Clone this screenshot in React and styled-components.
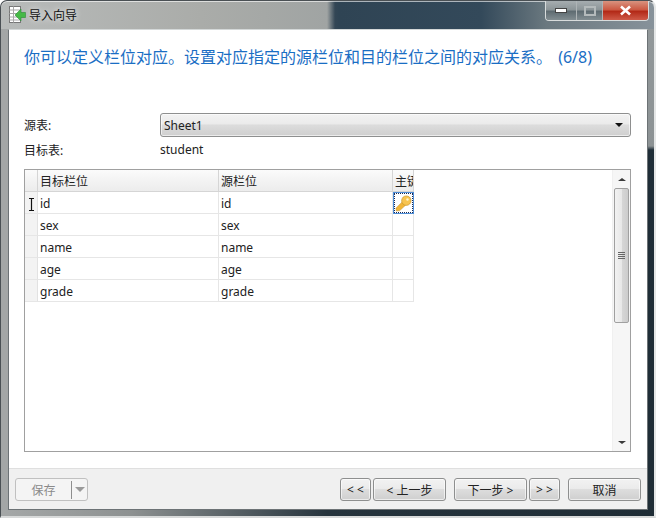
import React from 'react';
import styled, { createGlobalStyle } from 'styled-components';

const GlobalStyle = createGlobalStyle`
  html, body {
    margin: 0;
    padding: 0;
    background: #fff;
  }
  * {
    box-sizing: border-box;
  }
`;

const uiFont = `"Noto Sans", "Noto Sans CJK SC", "DejaVu Sans", sans-serif`;

const Window = styled.div`
  width: 656px;
  height: 518px;
  display: flex;
  flex-direction: column;
  overflow: hidden;
  border-radius: 7px 7px 0 0;
  border: 1px solid #4a5054;
  border-right: 2px solid #e4e6e6;
  border-bottom: 2px solid #d8dada;
  padding: 0 6px 6px 7px;
  box-shadow: inset 0 1px 0 rgba(255, 255, 255, 0.6);
  background:
    linear-gradient(90deg, #b8bbba 0, #aaaca9 200px, #a0a4a3 326px, #334655 334px, #2f4454 338px, #33495a 480px, #6a787f 545px, #87929a 100%) 0 0 / 100% 28px no-repeat,
    linear-gradient(180deg, #93999b 0, #8c9294 145px, #1f2e38 149px, #1f2d36 100%) 100% 0 / 6px 100% no-repeat,
    linear-gradient(90deg, #a5a8a8 0, #8d9191 20%, #26343d 50%, #1f2d36 100%) 0 100% / 100% 6px no-repeat,
    #a3a6a6;
  font-family: ${uiFont};
  color: #222;
`;

const TitleBar = styled.div`
  height: 28px;
  flex: none;
  display: flex;
  align-items: flex-start;
  justify-content: space-between;
`;

const TitleLeft = styled.div`
  display: flex;
  align-items: center;
  gap: 3px;
  height: 28px;
  padding-left: 1px;
  font-size: 12px;
  color: #111;
  text-shadow: 0 0 6px #fff;
`;

const WinButtons = styled.div`
  display: flex;
  height: 20px;
  margin-right: -1px;
  border: 1px solid #d8dcdc;
  border-top: none;
  border-radius: 0 0 4px 4px;
  overflow: hidden;
`;

const WinButton = styled.div`
  width: ${({ $w }) => $w}px;
  height: 100%;
  display: flex;
  align-items: center;
  justify-content: center;
  border-left: ${({ $first }) => ($first ? 'none' : '1px solid #aeb4b6')};
  background: ${({ $close }) =>
    $close
      ? 'linear-gradient(180deg, #d9937f 0, #cc5a44 45%, #b32a18 55%, #cf5a48 100%)'
      : 'linear-gradient(180deg, #a6adb0 0, #8c9598 45%, #5f6c72 55%, #828d91 100%)'};
`;

const Content = styled.div`
  flex: 1;
  min-height: 0;
  display: flex;
  flex-direction: column;
  background: #fff;
  border: 1px solid #6c7275;
  border-top-color: #d4d8d8;
`;

const Main = styled.div`
  flex: 1;
  min-height: 0;
  display: flex;
  flex-direction: column;
  padding: 17px 16px 16px 15px;
`;

const Heading = styled.h1`
  margin: 0 0 46px;
  height: 20px;
  font-size: 16px;
  line-height: 20px;
  font-weight: 400;
  word-spacing: 2px;
  color: #1a6ec4;
  white-space: pre;
`;

const FormRow = styled.div`
  display: grid;
  grid-template-columns: 136px 1fr;
  align-items: center;
  height: ${({ $h }) => $h}px;
  margin-bottom: ${({ $mb }) => $mb || 0}px;
  font-size: 12px;
`;

const Select = styled.div`
  height: 24px;
  display: flex;
  align-items: center;
  justify-content: space-between;
  padding: 0 7px 0 3px;
  border: 1px solid #8e8f8f;
  border-radius: 3px;
  box-shadow: inset 0 0 0 1px rgba(255, 255, 255, 0.6);
  background: linear-gradient(180deg, #f2f2f2 0, #ebebeb 45%, #dcdcdc 50%, #cfcfcf 100%);
`;

const Arrow = styled.span`
  width: 0;
  height: 0;
  border-left: ${({ $s }) => $s}px solid transparent;
  border-right: ${({ $s }) => $s}px solid transparent;
  border-top: ${({ $s }) => $s}px solid ${({ $c }) => $c};
`;

const GridBox = styled.div`
  position: relative;
  flex: 1;
  min-height: 0;
  margin-top: 8px;
  display: flex;
  justify-content: space-between;
  border: 1px solid #a0a0a0;
  background: #fff;
`;

const Table = styled.div`
  width: 389px;
  display: flex;
  flex-direction: column;
  font-size: 12px;
`;

const Row = styled.div`
  display: grid;
  grid-template-columns: 13px 181px 174px 21px;
  height: 22px;
`;

const HeadCell = styled.div`
  display: flex;
  align-items: center;
  padding: 1px 0 0 2px;
  overflow: hidden;
  white-space: nowrap;
  border-right: 1px solid #d5d5d5;
  border-bottom: 1px solid #d5d5d5;
  background: linear-gradient(180deg, #fbfbfb 0, #f3f3f3 50%, #ececec 100%);
`;

const RowMark = styled.div`
  border-right: 1px solid #e2e2e2;
  border-bottom: 1px solid #e6e6e6;
  background: #f3f3f3;
`;

const Cell = styled.div`
  display: flex;
  align-items: center;
  padding: 1px 0 0 2px;
  border-right: 1px solid #e6e6e6;
  border-bottom: 1px solid #e6e6e6;
  background: #fff;
`;

const KeyCell = styled(Cell)`
  justify-content: center;
  padding: 0;
  ${({ $focus }) =>
    $focus &&
    `
    border: 1px solid #4f8fd8;
    outline: 1px dotted #1c2a52;
    outline-offset: -2px;
    background: #fff;
  `}
`;

const TextCursor = styled.svg`
  position: absolute;
  left: 3px;
  top: 28px;
`;

const ScrollBar = styled.div`
  width: 18px;
  display: flex;
  flex-direction: column;
  background: #f6f6f6;
  border-left: 1px solid #f0f0f0;
`;

const ScrollEnd = styled.div`
  height: 18px;
  flex: none;
  display: flex;
  align-items: center;
  justify-content: center;
`;

const ArrowUp = styled.span`
  width: 0;
  height: 0;
  border-left: 4px solid transparent;
  border-right: 4px solid transparent;
  border-bottom: 3px solid #3a3a3a;
`;

const ArrowDown = styled.span`
  width: 0;
  height: 0;
  border-left: 4px solid transparent;
  border-right: 4px solid transparent;
  border-top: 3px solid #3a3a3a;
`;

const Thumb = styled.div`
  height: 135px;
  flex: none;
  margin: 0 1px;
  display: flex;
  flex-direction: column;
  align-items: center;
  justify-content: center;
  gap: 1px;
  border: 1px solid #a0a0a0;
  border-radius: 2px;
  background: linear-gradient(90deg, #f2f2f2 0, #e8e8e8 50%, #d6d6d6 55%, #cccccc 100%);
`;

const Grip = styled.span`
  width: 7px;
  height: 1px;
  background: #666;
`;

const Track = styled.div`
  flex: 1;
`;

const Footer = styled.div`
  height: 41px;
  flex: none;
  display: flex;
  align-items: flex-start;
  justify-content: space-between;
  padding: 9px 6px 0 6px;
  background: #f0f0f0;
  border-top: 1px solid #dfdfdf;
`;

const ButtonGroup = styled.div`
  display: flex;
  align-items: center;
`;

const Button = styled.div`
  width: ${({ $w }) => $w}px;
  height: 23px;
  margin-left: ${({ $ml }) => $ml || 0}px;
  display: flex;
  align-items: center;
  justify-content: center;
  white-space: pre;
  font-size: 12px;
  color: #222;
  border: 1px solid #8e8f8f;
  border-radius: 3px;
  box-shadow: inset 0 0 0 1px rgba(255, 255, 255, 0.6);
  background: linear-gradient(180deg, #f2f2f2 0, #ebebeb 45%, #dddddd 50%, #cfcfcf 100%);
`;

const SaveButton = styled.div`
  width: 73px;
  height: 23px;
  display: flex;
  align-items: center;
  font-size: 12px;
  color: #8a8a8a;
  background: #f4f4f4;
  border: 1px solid #c0c0c0;
  border-radius: 3px;
`;

const SaveLabel = styled.span`
  width: 56px;
  text-align: center;
  border-right: 1px solid #8e8e8e;
`;

const SaveArrow = styled.span`
  flex: 1;
  display: flex;
  justify-content: center;
`;

const fields = ['id', 'sex', 'name', 'age', 'grade'];

const KeyIcon = () => (
  <svg width="17" height="17" viewBox="0 0 18 18">
    <path d="M1 14 L1.500 17 L5 16.500 L12.500 9.500 L9 6 Z" fill="#f2b536" stroke="#c8952a" strokeWidth="0.6" />
    <circle cx="12" cy="6" r="5" fill="#f7c450" stroke="#c8952a" strokeWidth="0.7" />
    <circle cx="13.200" cy="4.800" r="1.300" fill="#fff4c8" />
  </svg>
);

const AppIcon = () => (
  <svg width="17" height="18" viewBox="0 0 17 18">
    <rect x="0.500" y="0.500" width="11" height="16" fill="#fff" stroke="#777" />
    <path d="M0.500 4h11M0.500 7.500h11M0.500 11h11M0.500 14h11M4.500 0.500v16" stroke="#a8a8a8" fill="none" />
    <path d="M16.500 6.500h-4.500V3L6 9l6 6v-3.500h4.500z" fill="#46b946" stroke="#2a8a36" strokeWidth="0.6" />
  </svg>
);

const App = () => {
  return (
    <>
      <GlobalStyle />
      <Window>
        <TitleBar>
          <TitleLeft>
            <AppIcon />
            导入向导
          </TitleLeft>
          <WinButtons>
            <WinButton $w={30} $first>
              <svg width="12" height="5"><rect x="0.500" y="0.500" width="11" height="4" fill="#fff" stroke="#444" /></svg>
            </WinButton>
            <WinButton $w={26}>
              <svg width="12" height="10"><rect x="1" y="1" width="10" height="8" fill="none" stroke="#b4babb" strokeWidth="2" /></svg>
            </WinButton>
            <WinButton $w={46} $close>
              <svg width="13" height="11" viewBox="0 0 13 11">
                <path d="M2 1.500 L11 9.500 M11 1.500 L2 9.500" stroke="#fff" strokeWidth="2.600" />
              </svg>
            </WinButton>
          </WinButtons>
        </TitleBar>
        <Content>
          <Main>
            <Heading>你可以定义栏位对应。设置对应指定的源栏位和目的栏位之间的对应关系。 (6/8)</Heading>
            <FormRow $h={24} $mb={1}>
              <span>源表:</span>
              <Select>
                Sheet1
                <Arrow $s={4} $c="#111" />
              </Select>
            </FormRow>
            <FormRow $h={23}>
              <span>目标表:</span>
              <span>student</span>
            </FormRow>
            <GridBox>
              <Table>
                <Row>
                  <HeadCell />
                  <HeadCell>目标栏位</HeadCell>
                  <HeadCell>源栏位</HeadCell>
                  <HeadCell>主键</HeadCell>
                </Row>
                {fields.map((name, i) => (
                  <Row key={name}>
                    <RowMark />
                    <Cell>{name}</Cell>
                    <Cell>{name}</Cell>
                    <KeyCell $focus={i === 0}>{i === 0 && <KeyIcon />}</KeyCell>
                  </Row>
                ))}
              </Table>
              <TextCursor width="7" height="13" viewBox="0 0 7 13">
                <path d="M1 0.500h5M3.500 0.500v12M1 12.500h5" stroke="#111" fill="none" strokeWidth="1.200" />
              </TextCursor>
              <ScrollBar>
                <ScrollEnd><ArrowUp /></ScrollEnd>
                <Thumb>
                  <Grip /><Grip /><Grip /><Grip />
                </Thumb>
                <Track />
                <ScrollEnd><ArrowDown /></ScrollEnd>
              </ScrollBar>
            </GridBox>
          </Main>
          <Footer>
            <SaveButton>
              <SaveLabel>保存</SaveLabel>
              <SaveArrow><Arrow $s={5} $c="#9a9a9a" /></SaveArrow>
            </SaveButton>
            <ButtonGroup>
              <Button $w={31}>{'< <'}</Button>
              <Button $w={73} $ml={2}>{'< 上一步'}</Button>
              <Button $w={73} $ml={8}>{'下一步 >'}</Button>
              <Button $w={31} $ml={2}>{'> >'}</Button>
              <Button $w={73} $ml={8}>取消</Button>
            </ButtonGroup>
          </Footer>
        </Content>
      </Window>
    </>
  );
};

export default App;
